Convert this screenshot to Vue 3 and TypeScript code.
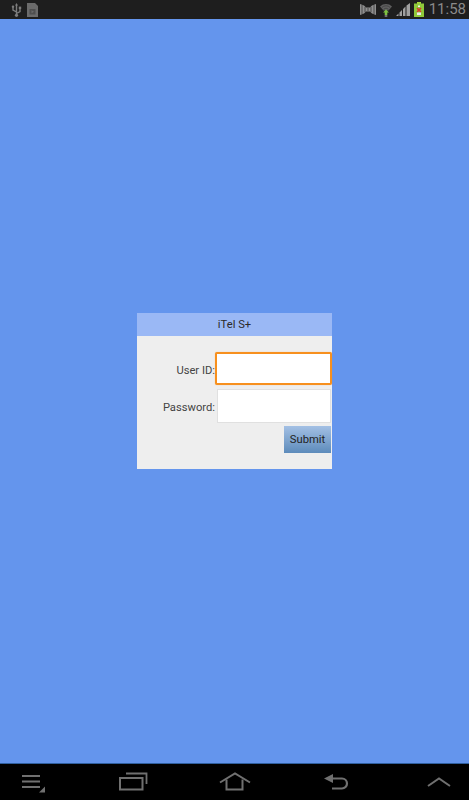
<script setup lang="ts">
const title: string = 'iTel S+'
</script>

<template>
  <div class="screen">
    <header class="status">
      <div class="status-left">
        <svg width="11" height="14" viewBox="0 0 11 14" class="ic"><path d="M5.500 2v10M5.500 9 2 7V4.500M5.500 10.500 9 8.500V5.500" fill="none" stroke="#7c7c7c" stroke-width="1.400"/><rect x="0.800" y="2.600" width="2.400" height="2.400" rx="1" fill="#7c7c7c"/><rect x="7.800" y="3.600" width="2.400" height="2.400" fill="#7c7c7c"/><path d="M4 2.600 5.500 0 7 2.600z" fill="#7c7c7c"/><circle cx="5.500" cy="12.300" r="1.600" fill="#7c7c7c"/></svg>
        <svg width="11" height="14" viewBox="0 0 11 14" class="ic"><path d="M0 0h8l3 3v11H0z" fill="#6b6b6b"/><path d="M2.500 6h6v5.500h-6z" fill="#4f4f4f"/><path d="M4.500 7.300l2.500 1.400-2.500 1.500z" fill="#6b6b6b"/></svg>
      </div>
      <div class="status-right">
        <svg width="16" height="11" viewBox="0 0 16 11" class="ic"><path d="M0 0l4 1.500 2 2h4l2-2L16 0v11l-4-1.500-2-2H6l-2 2L0 11z" fill="#8f8f8f"/><path d="M2 1v9M5 3v5M8 4v3M11 3v5M14 1v9" stroke="#4a4a4a" stroke-width="1"/></svg>
        <svg width="12" height="14" viewBox="0 0 12 14" class="ic"><path d="M0 3.500a8.500 8.500 0 0 1 12 0L8.500 7.500h-5z" fill="#5f5f5f"/><path d="M1.800 4.500a6 6 0 0 1 8.400 0M3.500 6.300a3.600 3.600 0 0 1 5 0" fill="none" stroke="#3d3d3d" stroke-width="0.800"/><path d="M6 6.500 9 9.500H7.300V12H4.700V9.500H3z" fill="#7fc241"/><path d="M4.700 12h2.600v2H4.700z" fill="#6e6e6e"/></svg>
        <svg width="14" height="13" viewBox="0 0 14 13" class="ic"><path d="M0 13 2.500 10.500V13zM3.500 13V9.500l2.500-2.500v6zM7 13V6l2.500-2.500V13zM10.500 13V2.500L14 0v13z" fill="#a0a0a0"/></svg>
        <svg width="10" height="15" viewBox="0 0 10 15" class="ic"><path d="M3 0h4v2H3z" fill="#a4d63c"/><path d="M0 1.500h10V15H0z" fill="#8fc93a"/><path d="M3 6 7 10M7 6 3 10" stroke="#d8392c" stroke-width="1.600"/><path d="M4 3.500h2V5H4z" fill="#f2f2f2"/><path d="M3 10.500h4V13H3z" fill="#ececec"/></svg>
        <span class="clock">11:58</span>
      </div>
    </header>

    <main class="stage">
      <form class="dialog" @submit.prevent>
        <div class="dialog-title">{{ title }}</div>
        <div class="dialog-body">
          <div class="row">
            <label class="label" for="uid">User ID:</label>
            <input id="uid" class="field focused" type="text" />
          </div>
          <div class="row">
            <label class="label" for="pwd">Password:</label>
            <input id="pwd" class="field" type="password" />
          </div>
          <div class="actions">
            <button class="submit" type="submit">Submit</button>
          </div>
        </div>
      </form>
    </main>

    <nav class="nav">
      <svg width="24" height="19" viewBox="0 0 24 19" class="nav-icon nav-menu"><path d="M0 2h18M0 7.500h18M0 13h18" stroke="#707070" stroke-width="2"/><path d="M23 12.500v6h-6z" fill="#707070"/></svg>
      <svg width="29" height="19" viewBox="0 0 29 19" class="nav-icon nav-recent"><path d="M1 6h22.500v11.500H1z" fill="none" stroke="#707070" stroke-width="2"/><path d="M7 1.500h20.500V12" fill="none" stroke="#707070" stroke-width="1.800"/></svg>
      <svg width="32" height="19" viewBox="0 0 32 19" class="nav-icon nav-home"><path d="M1 10.500 16 1.500 31 10.500" fill="none" stroke="#707070" stroke-width="2"/><path d="M7.500 7.500V17.500h16V7.500" fill="none" stroke="#707070" stroke-width="2"/></svg>
      <svg width="25" height="17" viewBox="0 0 25 17" class="nav-icon nav-back"><path d="M6 5.500h12a5 5 0 0 1 0 10H8" fill="none" stroke="#707070" stroke-width="2.200"/><path d="M0 5.500 9 1v9z" fill="#707070"/></svg>
      <svg width="24" height="10" viewBox="0 0 24 10" class="nav-icon nav-up"><path d="M1 9 12 1.500 23 9" fill="none" stroke="#707070" stroke-width="2"/></svg>
    </nav>
  </div>
</template>

<style>
html, body { margin: 0; padding: 0; background: #6495ed; }
</style>

<style scoped>
.screen {
  width: 469px;
  height: 800px;
  display: flex;
  flex-direction: column;
  overflow: hidden;
  font-family: Roboto, "Liberation Sans", sans-serif;
}
.ic { display: block; flex: none; }
.status {
  height: 19px;
  flex: none;
  background: #1e1e1e;
  display: flex;
  align-items: center;
  justify-content: space-between;
  padding: 0 3px 0 11px;
  box-sizing: border-box;
}
.status-left { display: flex; align-items: center; gap: 5px; }
.status-right { display: flex; align-items: center; gap: 4px; }
.clock {
  color: #8a8a8a;
  font-size: 15px;
  line-height: 19px;
  margin-left: 1px;
}
.stage {
  flex: 1;
  min-height: 0;
  background: #6495ed;
  display: flex;
  align-items: center;
  justify-content: center;
}
.dialog {
  width: 195px;
  height: 156px;
  display: flex;
  flex-direction: column;
  background: #eeeeee;
}
.dialog-title {
  height: 23px;
  flex: none;
  background: #9ab8f5;
  color: #2a2a2a;
  font-size: 11.2px;
  line-height: 23px;
  text-align: center;
}
.dialog-body {
  flex: 1;
  padding: 16px 1px 0 0;
  display: flex;
  flex-direction: column;
  gap: 4px;
}
.row { display: flex; align-items: center; justify-content: flex-end; }
.label { color: #444; font-size: 11.2px; padding-top: 3px; }
.field {
  width: 114px;
  height: 34px;
  box-sizing: border-box;
  border: 1px solid #e0e0e0;
  background: #fff;
  padding: 0;
  margin: 0 0 0 2px;
  outline: none;
}
.field.focused {
  width: 117px;
  height: 33px;
  border: 2px solid #f7901e;
  border-radius: 2px;
  margin: 0 -1px 0 0;
  box-shadow: 0 0 1px rgba(247, 144, 30, 0.6);
}
.actions { display: flex; justify-content: flex-end; margin-top: -1px; }
.submit {
  width: 47px;
  height: 27px;
  border: none;
  padding: 0;
  color: #222;
  font-family: inherit;
  font-size: 11.2px;
  background: linear-gradient(#a3c0e4, #5d8bbb);
}
.nav {
  height: 37px;
  flex: none;
  background: #000;
  border-top: 1px solid #2f5f9e;
  box-sizing: border-box;
  display: flex;
  align-items: flex-start;
}
.nav-icon { display: block; flex: none; }
.nav-menu { margin: 10px 0 0 22px; }
.nav-recent { margin: 8px 0 0 73px; }
.nav-home { margin: 8px 0 0 71px; }
.nav-back { margin: 9px 0 0 73px; }
.nav-up { margin: 13px 0 0 78px; }
</style>
